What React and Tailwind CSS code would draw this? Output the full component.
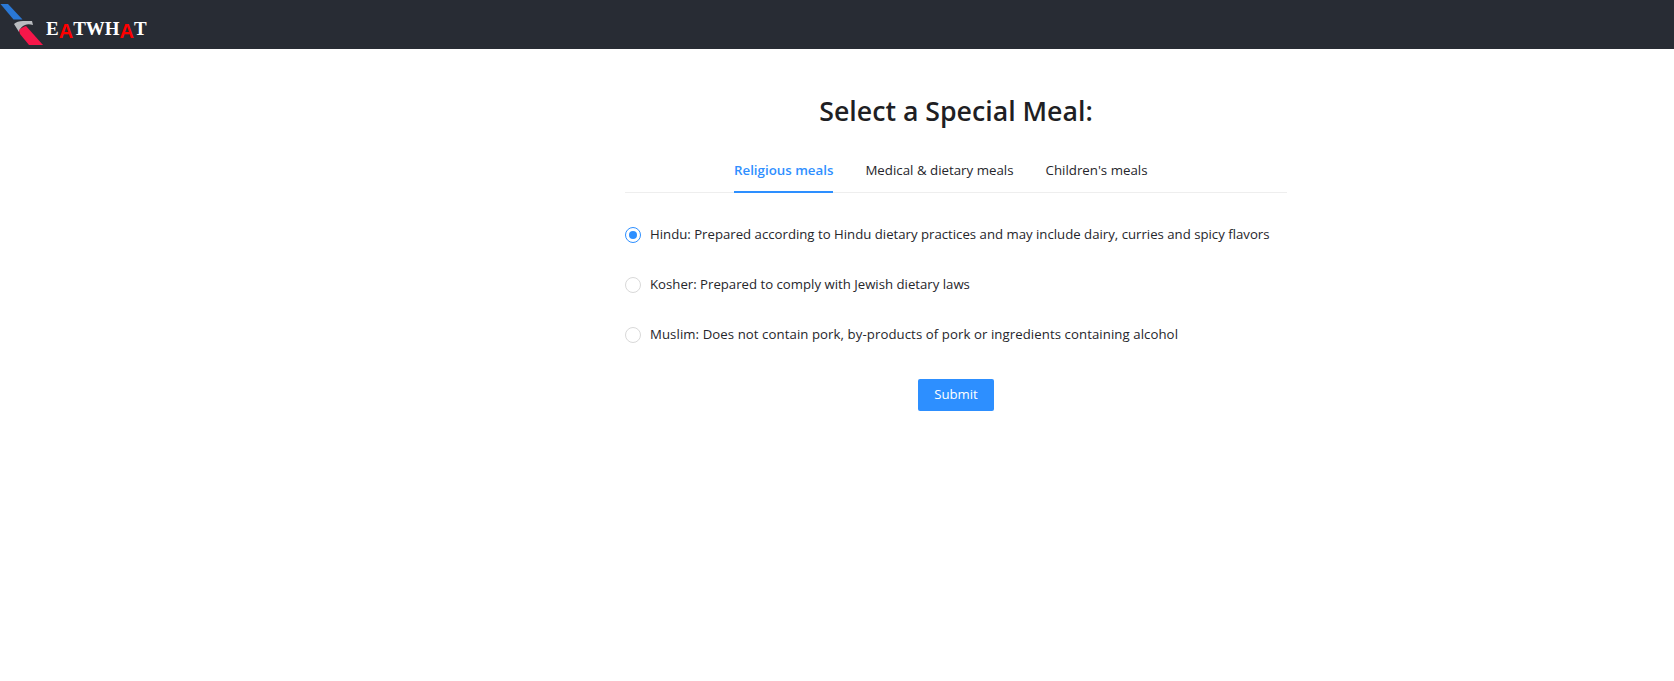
import React, { useState } from "react";

const FONT = "font-['Open_Sans','Noto_Sans',sans-serif]";

const tabs = ["Religious meals", "Medical & dietary meals", "Children's meals"];

const meals = [
  { text: "Hindu: Prepared according to Hindu dietary practices and may include dairy, curries and spicy flavors", track: "" },
  { text: "Kosher: Prepared to comply with Jewish dietary laws", track: "" },
  { text: "Muslim: Does not contain pork, by-products of pork or ingredients containing alcohol", track: "tracking-[0.08px]" },
];

const Logo = () => (
  <svg width="44" height="46" viewBox="0 0 44 46" className="shrink-0">
    <path d="M0.5 4 L8 4 L22.5 19.5 L13.5 19.5 Z" fill="#2a78d6" />
    <path d="M14 24 C16 22 19 21 23 21 L32 21 L33 25 C30 24 27 24 25 25 C22 26 20 28 19 32 Z" fill="#b9bcc0" />
    <path d="M19 30 C21 28 23 27 26 26 L43 45 L29 45 L20 34 Z" fill="#f5174a" />
  </svg>
);

const RedA = ({ children }) => (
  <span className="text-[#ff0000] text-[20px] align-[-3px] font-['Liberation_Sans',sans-serif]">{children}</span>
);

const App = () => {
  const [selected, setSelected] = useState(0);

  return (
    <div className={`min-h-[681px] bg-white ${FONT}`}>
      {/* HEADER */}
      <div className="h-[49px] bg-[#282c34] flex items-start overflow-hidden">
        <Logo />
        <div className="ml-[2px] mt-[19px] text-[19px] leading-[20px] font-bold text-white font-['Liberation_Serif',serif] whitespace-nowrap">
          E<RedA>A</RedA>TWH<RedA>A</RedA>T
        </div>
      </div>

      <div className="ml-[625px] w-[662px] pt-[44px]">
        <h1 className="text-[26.7px] leading-[36px] font-semibold text-[#1f1f24] text-center">
          Select a Special Meal:
        </h1>

        {/* TABS */}
        <div className="mt-[24px] pl-[109px] flex gap-8 border-b border-[#eeeeee] h-[40px]">
          {tabs.map((tab, idx) => (
            <div
              key={tab}
              className={`h-[40px] pt-[6px] text-[13.3px] leading-[22px] ${
                idx === 0
                  ? "font-semibold text-[#2f8fff] border-b-2 border-[#2d8fff]"
                  : "text-[#26262b]"
              }`}
            >
              {tab}
            </div>
          ))}
        </div>

        {/* OPTIONS */}
        <div className="mt-[30px] flex flex-col gap-[28px]">
          {meals.map((meal, idx) => (
            <label key={meal.text} className="flex items-center h-[22px] cursor-pointer">
              <input
                type="radio"
                name="meal"
                className="sr-only"
                checked={selected === idx}
                onChange={() => setSelected(idx)}
              />
              <span
                className={`mt-[1px] w-4 h-4 rounded-full border flex items-center justify-center shrink-0 ${
                  selected === idx ? "border-[#2d8fff]" : "border-[#d9d9d9]"
                }`}
              >
                {selected === idx && <span className="w-2 h-2 rounded-full bg-[#2d8fff]" />}
              </span>
              <span className={`ml-[9px] text-[13.2px] leading-[22px] text-[#26262b] whitespace-nowrap ${meal.track}`}>
                {meal.text}
              </span>
            </label>
          ))}
        </div>

        <div className="mt-[34px] flex justify-center">
          <button className="w-[76px] h-[32px] rounded-[2px] bg-[#2d8fff] text-white text-[13.2px]">
            Submit
          </button>
        </div>
      </div>
    </div>
  );
};

export default App;
